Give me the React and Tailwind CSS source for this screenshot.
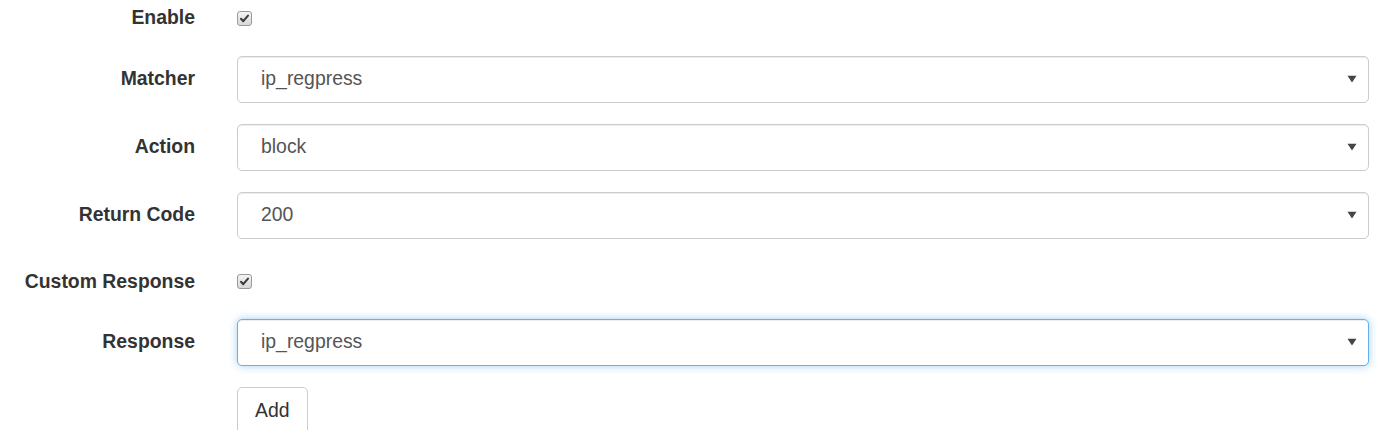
import { useState } from 'react';

function Checkbox({ checked, onChange }) {
  return (
    <button
      type="button"
      onClick={onChange}
      className="w-[15px] h-[15px] rounded-[3px] border border-[#9a9a9a] bg-gradient-to-b from-[#f4f4f4] to-[#d8d8d8] flex items-center justify-center"
    >
      {checked && (
        <svg width="11" height="11" viewBox="0 0 11 11">
          <path d="M2 5.8 L4.3 8.2 L9 2.6" fill="none" stroke="#3a3a3a" strokeWidth="2" strokeLinecap="round" strokeLinejoin="round" />
        </svg>
      )}
    </button>
  );
}

function Select({ value, focused }) {
  return (
    <div
      className={`h-[47px] flex items-center justify-between bg-white rounded-[5px] border pl-[23px] pr-[11px] text-[#555] ${focused
        ? 'border-[#66afe9] shadow-[inset_0_1px_1px_rgba(0,0,0,0.075),0_0_8px_rgba(102,175,233,0.6)]'
        : 'border-[#ccc] shadow-[inset_0_1px_1px_rgba(0,0,0,0.075)]'}`}
    >
      <span>{value}</span>
      <svg width="10" height="8" viewBox="0 0 10 8">
        <path d="M0.5 0.8 L9.5 0.8 L5 7.5 Z" fill="#444" />
      </svg>
    </div>
  );
}

function Row({ label, children, className }) {
  return (
    <div className={`flex items-center ${className}`}>
      <label className="w-[195px] shrink-0 text-right font-bold text-[#333]">{label}</label>
      <div className="flex-1 ml-[42px] mr-[15px]">{children}</div>
    </div>
  );
}

export default function App() {
  const [enable, setEnable] = useState(true);
  const [custom, setCustom] = useState(true);

  return (
    <div className="w-[1384px] h-[430px] overflow-hidden bg-white text-[19.4px] font-['Liberation_Sans',Arial,sans-serif]">
      <Row label="Enable" className="h-[36px] mb-[20px]">
        <Checkbox checked={enable} onChange={() => setEnable(!enable)} />
      </Row>
      <Row label="Matcher" className="h-[46px] mb-[22px]">
        <Select value="ip_regpress" />
      </Row>
      <Row label="Action" className="h-[46px] mb-[22px]">
        <Select value="block" />
      </Row>
      <Row label="Return Code" className="h-[46px] mb-[22px]">
        <Select value="200" />
      </Row>
      <Row label="Custom Response" className="h-[43px] mb-[16px]">
        <Checkbox checked={custom} onChange={() => setCustom(!custom)} />
      </Row>
      <Row label="Response" className="h-[46px] mb-[22px]">
        <Select value="ip_regpress" focused />
      </Row>
      <div className="ml-[237px]">
        <button className="h-[47px] px-[17px] bg-white border border-[#ccc] rounded-[5px] text-[#333]">
          Add
        </button>
      </div>
    </div>
  );
}
